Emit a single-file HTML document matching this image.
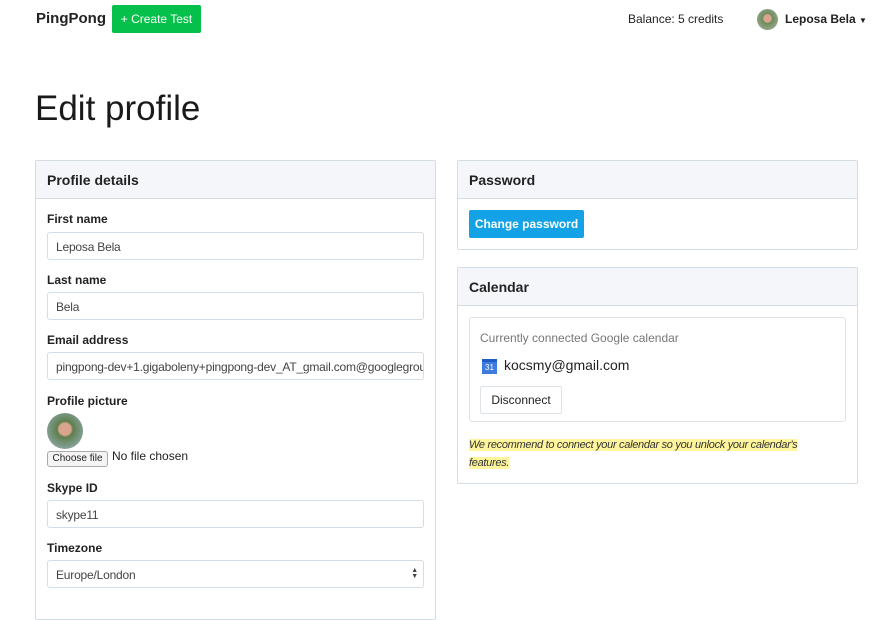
<!DOCTYPE html>
<html><head><style>
*{box-sizing:border-box;margin:0;padding:0}
body{width:896px;height:600px;overflow:hidden;background:#fff;font-family:"Liberation Sans",sans-serif;color:#222;position:relative}
.a{position:absolute}
.lbl{position:absolute;left:47px;font-size:12px;font-weight:bold;color:#222}
.inp{position:absolute;left:47px;width:377px;height:28px;border:1px solid #d5dde4;border-radius:3px;font-size:12px;color:#444;padding:7px 8px;white-space:nowrap;overflow:hidden;letter-spacing:-0.2px}
.panel{position:absolute;border:1px solid #d4dce4;border-radius:2px;background:#fff}
.ph{height:38px;background:#f4f6fa;border-bottom:1px solid #d4dce4;font-size:14px;font-weight:bold;padding:11px 11px}
</style></head><body>
<div class="a" style="left:36px;top:10px;font-size:15px;font-weight:bold">PingPong</div>
<div class="a" style="left:112px;top:5px;width:89px;height:28px;background:#05c14b;border-radius:2px;color:#fff;font-size:12px;text-align:center;line-height:28px">+ Create Test</div>
<div class="a" style="left:628px;top:12px;font-size:12px">Balance: 5 credits</div>
<div class="a" style="left:757px;top:9px;width:21px;height:21px;border-radius:50%;background:radial-gradient(circle at 50% 45%,#d9a58e 0 25%,#6f8a5e 30%,#a8b8a0 100%)"></div>
<div class="a" style="left:785px;top:12px;font-size:12px;font-weight:bold">Leposa Bela <span style="font-size:8px">▼</span></div>
<div class="a" style="left:35px;top:89px;font-size:35px;color:#1a1a1a">Edit profile</div>

<div class="panel" style="left:35px;top:160px;width:401px;height:460px">
<div class="ph">Profile details</div></div>
<div class="lbl" style="top:212px">First name</div>
<div class="inp" style="top:232px">Leposa Bela</div>
<div class="lbl" style="top:273px">Last name</div>
<div class="inp" style="top:292px">Bela</div>
<div class="lbl" style="top:333px">Email address</div>
<div class="inp" style="top:352px">pingpong-dev+1.gigaboleny+pingpong-dev_AT_gmail.com@googlegroups.com</div>
<div class="lbl" style="top:394px">Profile picture</div>
<div class="a" style="left:47px;top:413px;width:36px;height:36px;border-radius:50%;background:radial-gradient(circle at 50% 45%,#d9a58e 0 22%,#5f7f4e 30%,#9fb7c8 100%)"></div>
<div class="a" style="left:47px;top:451px;width:61px;height:16px;border:1px solid #aaa;border-radius:3px;background:#f4f4f4;font-size:10px;text-align:center;line-height:14px">Choose file</div>
<div class="a" style="left:112px;top:449px;font-size:12px">No file chosen</div>
<div class="lbl" style="top:481px">Skype ID</div>
<div class="inp" style="top:500px">skype11</div>
<div class="lbl" style="top:541px">Timezone</div>
<div class="inp" style="top:560px">Europe/London<span style="position:absolute;right:5px;top:7px;font-size:7px;line-height:6px">▲<br>▼</span></div>

<div class="panel" style="left:457px;top:160px;width:401px;height:90px"><div class="ph">Password</div></div>
<div class="a" style="left:469px;top:210px;width:115px;height:28px;background:#14a2e6;border-radius:2px;color:#fff;font-size:12px;font-weight:bold;text-align:center;line-height:28px">Change password</div>

<div class="panel" style="left:457px;top:267px;width:401px;height:217px"><div class="ph">Calendar</div></div>
<div class="a" style="left:469px;top:317px;width:377px;height:105px;border:1px solid #dde3e9;border-radius:3px"></div>
<div class="a" style="left:480px;top:331px;font-size:12px;color:#777">Currently connected Google calendar</div>
<div class="a" style="left:482px;top:359px;width:15px;height:15px;background:#3d7be0;border-top:3px solid #1f5cc4;color:#fff;font-size:8px;text-align:center;line-height:12px">31</div>
<div class="a" style="left:504px;top:357px;font-size:14px">kocsmy@gmail.com</div>
<div class="a" style="left:480px;top:386px;width:82px;height:28px;border:1px solid #dde3e9;border-radius:2px;font-size:12px;text-align:center;line-height:26px">Disconnect</div>
<div class="a" style="left:469px;top:436px;width:350px;font-size:11px;letter-spacing:-0.3px;font-style:italic;line-height:18px;color:#333"><span style="background:#fff59d">We recommend to connect your calendar so you unlock your calendar's features.</span></div>
</body></html>
